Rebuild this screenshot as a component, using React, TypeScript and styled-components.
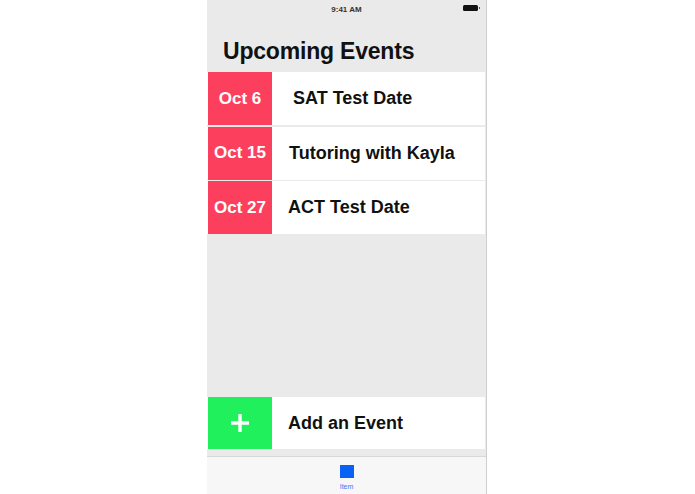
import React from 'react';
import styled, { createGlobalStyle } from 'styled-components';

const GlobalStyle = createGlobalStyle`
  html, body {
    margin: 0;
    padding: 0;
    background: #ffffff;
    font-family: 'Liberation Sans', Arial, sans-serif;
  }
`;

interface EventItem {
  date: string;
  title: string;
  indent: number;
}

const events: EventItem[] = [
  { date: 'Oct 6', title: 'SAT Test Date', indent: 21 },
  { date: 'Oct 15', title: 'Tutoring with Kayla', indent: 17 },
  { date: 'Oct 27', title: 'ACT Test Date', indent: 16 },
];

function App() {
  return (
    <>
      <GlobalStyle />
      <Page>
        <Phone>
          <StatusBar>
            <Clock>9:41 AM</Clock>
            <Battery />
          </StatusBar>
          <Header>
            <Title>Upcoming Events</Title>
          </Header>
          <List>
            {events.map((ev) => (
              <Row key={ev.date}>
                <DateBlock>{ev.date}</DateBlock>
                <RowLabel indent={ev.indent}>{ev.title}</RowLabel>
              </Row>
            ))}
          </List>
          <Spacer />
          <AddRow>
            <AddBlock>
              <svg width="20" height="20" viewBox="0 0 20 20">
                <path d="M10 1v18M1 10h18" stroke="#ffffff" strokeWidth="3.4" />
              </svg>
            </AddBlock>
            <RowLabel indent={16}>Add an Event</RowLabel>
          </AddRow>
          <TabBar>
            <TabItem>
              <TabIcon />
              <TabText>Item</TabText>
            </TabItem>
          </TabBar>
        </Phone>
      </Page>
    </>
  );
}

export default App;

// Styles
const Page = styled.div`
  width: 695px;
  height: 494px;
  display: flex;
  justify-content: flex-start;
  padding-left: 207px;
  box-sizing: border-box;
`;

const Phone = styled.div`
  width: 280px;
  height: 494px;
  display: flex;
  flex-direction: column;
  background: #eaeaea;
  border-right: 1px solid #cfcfcf;
  box-sizing: border-box;
  overflow: hidden;
`;

const StatusBar = styled.div`
  position: relative;
  height: 18px;
  display: flex;
  align-items: center;
  justify-content: center;
`;

const Clock = styled.span`
  font-size: 8px;
  font-weight: 600;
  color: #333;
`;

const Battery = styled.div`
  position: absolute;
  right: 8px;
  top: 5px;
  width: 15px;
  height: 6px;
  border-radius: 1.5px;
  background: #111;
  &::after {
    content: '';
    position: absolute;
    right: -2px;
    top: 2px;
    width: 1px;
    height: 2px;
    background: #555;
  }
`;

const Header = styled.div`
  height: 54px;
  display: flex;
  align-items: center;
  padding-left: 16px;
  padding-top: 12px;
  box-sizing: border-box;
`;

const Title = styled.h1`
  margin: 0;
  font-size: 23px;
  font-weight: 700;
  color: #111;
  letter-spacing: -0.2px;
`;

const List = styled.div`
  display: flex;
  flex-direction: column;
  gap: 1.5px;
`;

const Row = styled.div`
  height: 53px;
  display: flex;
  align-items: stretch;
  background: #ffffff;
  margin-right: 1px;
`;

const DateBlock = styled.div`
  width: 64px;
  margin-left: 1px;
  background: #fd3f5e;
  color: #ffffff;
  font-size: 17px;
  font-weight: 700;
  display: flex;
  align-items: center;
  justify-content: center;
`;

const RowLabel = styled.div<{ indent: number }>`
  display: flex;
  align-items: center;
  padding-left: ${(p) => p.indent}px;
  font-size: 18px;
  font-weight: 700;
  color: #111;
`;

const Spacer = styled.div`
  flex: 1;
`;

const AddRow = styled(Row)`
  height: 52px;
  margin-bottom: 7px;
`;

const AddBlock = styled.div`
  width: 64px;
  margin-left: 1px;
  background: #1ff05c;
  display: flex;
  align-items: center;
  justify-content: center;
`;

const TabBar = styled.div`
  height: 38px;
  box-sizing: border-box;
  background: #f7f7f7;
  border-top: 1px solid #d8d8d8;
  display: flex;
  justify-content: center;
`;

const TabItem = styled.div`
  display: flex;
  flex-direction: column;
  align-items: center;
  padding-top: 8px;
`;

const TabIcon = styled.div`
  width: 14px;
  height: 13px;
  background: #0a62f5;
`;

const TabText = styled.span`
  margin-top: 5px;
  font-size: 7px;
  color: #3c7cf0;
`;
